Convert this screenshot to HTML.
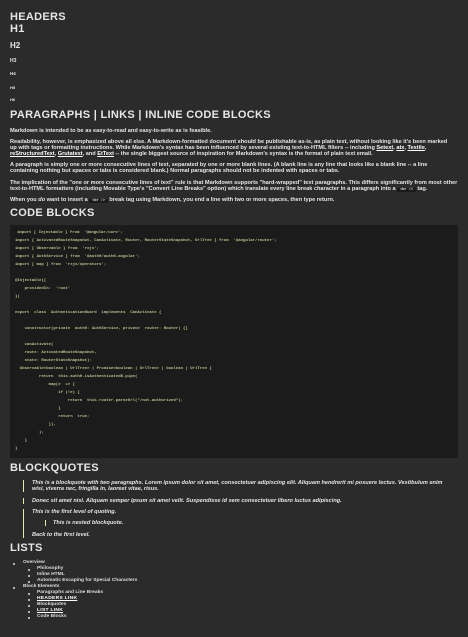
<!DOCTYPE html>
<html><head><meta charset="utf-8"><style>
body{margin:0;background:#2b2b2b;width:468px;height:637px;overflow:hidden;position:relative;font-family:"Liberation Sans",Arial,sans-serif;color:#e6e6e6;font-weight:bold}
.a{position:absolute;white-space:nowrap;line-height:1}
.h{font-size:11px;letter-spacing:0.3px}
.p{font-size:5.6px;left:10px}
.p u{color:#fff}
code{font-family:"Liberation Mono",monospace;background:#1b1b1b;font-size:3.5px;padding:0 3px;border-radius:1px}
.code{position:absolute;left:10px;top:225px;width:448px;height:233px;background:#1b1b1b;border-radius:1px}
.c{position:absolute;font-family:"Liberation Mono",monospace;font-size:4px;color:#bfc08f;white-space:pre;line-height:1}
.q{font-size:5.6px;font-style:italic;left:32px}
.bar{position:absolute;width:1px;background:#e6e6b0}
.l{font-size:4.9px;color:#ddd}
.b{position:absolute;width:2px;height:2px;background:#ddd;border-radius:1px}
</style></head><body>
<div class="a h" style="left:10px;top:12px">HEADERS</div>
<div class="a h" style="left:10px;top:24px">H1</div>
<div class="a" style="left:10px;top:42px;font-size:8px">H2</div>
<div class="a" style="left:10px;top:59px;font-size:5px">H3</div>
<div class="a" style="left:10px;top:72px;font-size:4.5px">H4</div>
<div class="a" style="left:10px;top:86px;font-size:4px">H5</div>
<div class="a" style="left:10px;top:98px;font-size:4px">H6</div>
<div class="a h" style="left:10px;top:110px">PARAGRAPHS | LINKS | INLINE CODE BLOCKS</div>
<div class="a p" style="top:129px">Markdown is intended to be as easy-to-read and easy-to-write as is feasible.</div>
<div class="a p" style="top:140px">Readability, however, is emphasized above all else. A Markdown-formatted document should be publishable as-is, as plain text, without looking like it's been marked</div>
<div class="a p" style="top:146px">up with tags or formatting instructions. While Markdown's syntax has been influenced by several existing text-to-HTML filters -- including <u>Setext</u>, <u>atx</u>, <u>Textile</u>,</div>
<div class="a p" style="top:152px"><u>reStructuredText</u>, <u>Grutatext</u>, and <u>EtText</u> -- the single biggest source of inspiration for Markdown's syntax is the format of plain text email.</div>
<div class="a p" style="top:163px">A paragraph is simply one or more consecutive lines of text, separated by one or more blank lines. (A blank line is any line that looks like a blank line -- a line</div>
<div class="a p" style="top:169px">containing nothing but spaces or tabs is considered blank.) Normal paragraphs should not be indented with spaces or tabs.</div>
<div class="a p" style="top:181px">The implication of the "one or more consecutive lines of text" rule is that Markdown supports "hard-wrapped" text paragraphs. This differs significantly from most other</div>
<div class="a p" style="top:187px">text-to-HTML formatters (including Movable Type's "Convert Line Breaks" option) which translate every line break character in a paragraph into a <code>&lt;br /&gt;</code> tag.</div>
<div class="a p" style="top:198px">When you <i>do</i> want to insert a <code>&lt;br /&gt;</code> break tag using Markdown, you end a line with two or more spaces, then type return.</div>
<div class="a h" style="left:10px;top:208px">CODE BLOCKS</div>
<div class="code"></div>
<div class="c" style="left:17px;top:231px">import { Injectable } from  '@angular/core';</div>
<div class="c" style="left:15px;top:239px">import { ActivatedRouteSnapshot, CanActivate, Router, RouterStateSnapshot, UrlTree } from  '@angular/router';</div>
<div class="c" style="left:15px;top:247px">import { Observable } from  'rxjs';</div>
<div class="c" style="left:15px;top:255px">import { AuthService } from  '@auth0/auth0-angular';</div>
<div class="c" style="left:15px;top:263px">import { map } from  'rxjs/operators';</div>
<div class="c" style="left:15px;top:279px">@Injectable({</div>
<div class="c" style="left:15px;top:287px">    providedIn:  'root'</div>
<div class="c" style="left:15px;top:295px">})</div>
<div class="c" style="left:15px;top:311px">export  class  AuthenticationGuard  implements  CanActivate {</div>
<div class="c" style="left:15px;top:327px">    constructor(private  auth0: AuthService, private  router: Router) {}</div>
<div class="c" style="left:15px;top:343px">    canActivate(</div>
<div class="c" style="left:15px;top:351px">    route: ActivatedRouteSnapshot,</div>
<div class="c" style="left:15px;top:359px">    state: RouterStateSnapshot):</div>
<div class="c" style="left:15px;top:367px">  Observable&lt;boolean | UrlTree&gt; | Promise&lt;boolean | UrlTree&gt; | boolean | UrlTree {</div>
<div class="c" style="left:15px;top:375px">          return  this.auth0.isAuthenticated$.pipe(</div>
<div class="c" style="left:15px;top:383px">              map(e  =&gt; {</div>
<div class="c" style="left:15px;top:391px">                  if (!e) {</div>
<div class="c" style="left:15px;top:399px">                      return  this.router.parseUrl("/not-authorized");</div>
<div class="c" style="left:15px;top:407px">                  }</div>
<div class="c" style="left:15px;top:415px">                  return  true;</div>
<div class="c" style="left:15px;top:423px">              }),</div>
<div class="c" style="left:15px;top:431px">          );</div>
<div class="c" style="left:15px;top:439px">    }</div>
<div class="c" style="left:15px;top:447px">}</div>
<div class="a h" style="left:10px;top:463px">BLOCKQUOTES</div>
<div class="bar" style="left:23px;top:480px;height:12px"></div>
<div class="a q" style="top:481px">This is a blockquote with two paragraphs. Lorem ipsum dolor sit amet, consectetuer adipiscing elit. Aliquam hendrerit mi posuere lectus. Vestibulum enim</div>
<div class="a q" style="top:487px">wisi, viverra nec, fringilla in, laoreet vitae, risus.</div>
<div class="bar" style="left:23px;top:498px;height:6px"></div>
<div class="a q" style="top:499px">Donec sit amet nisl. Aliquam semper ipsum sit amet velit. Suspendisse id sem consectetuer libero luctus adipiscing.</div>
<div class="bar" style="left:23px;top:509px;height:29px"></div>
<div class="a q" style="top:510px">This is the first level of quoting.</div>
<div class="bar" style="left:45px;top:520px;height:6px"></div>
<div class="a q" style="left:53px;top:521px">This is nested blockquote.</div>
<div class="a q" style="top:533px">Back to the first level.</div>
<div class="a h" style="left:10px;top:543px">LISTS</div>
<div class="b" style="left:13px;top:563px"></div><div class="a l" style="left:23px;top:561px">Overview</div>
<div class="b" style="left:28px;top:569px"></div><div class="a l" style="left:37px;top:567px">Philosophy</div>
<div class="b" style="left:28px;top:575px"></div><div class="a l" style="left:37px;top:573px">Inline HTML</div>
<div class="b" style="left:28px;top:581px"></div><div class="a l" style="left:37px;top:579px">Automatic Escaping for Special Characters</div>
<div class="b" style="left:13px;top:587px"></div><div class="a l" style="left:23px;top:585px">Block Elements</div>
<div class="b" style="left:28px;top:593px"></div><div class="a l" style="left:37px;top:591px">Paragraphs and Line Breaks</div>
<div class="b" style="left:28px;top:599px"></div><div class="a l" style="left:37px;top:597px;color:#fff;text-decoration:underline;letter-spacing:.3px">HEADERS LINK</div>
<div class="b" style="left:28px;top:605px"></div><div class="a l" style="left:37px;top:603px">Blockquotes</div>
<div class="b" style="left:28px;top:611px"></div><div class="a l" style="left:37px;top:609px;color:#fff;text-decoration:underline;letter-spacing:.3px">LIST LINK</div>
<div class="b" style="left:28px;top:617px"></div><div class="a l" style="left:37px;top:615px">Code Blocks</div>
</body></html>
